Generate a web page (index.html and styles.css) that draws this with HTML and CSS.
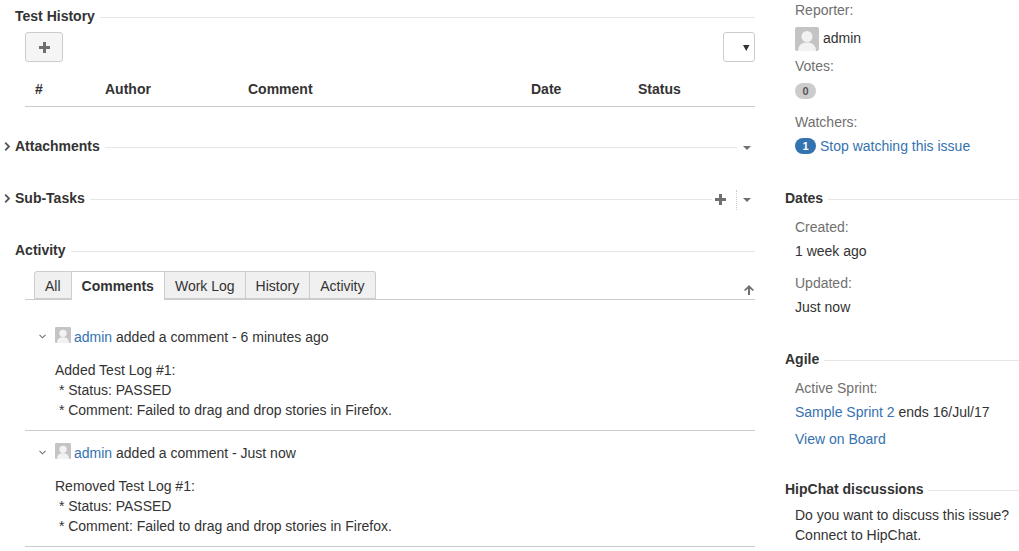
FILE: index.html
```html
<!DOCTYPE html>
<html lang="en">
<head>
<meta charset="utf-8">
<title>Issue</title>
<link rel="stylesheet" href="styles.css">
</head>
<body>
<div class="page">
  <main class="main">
    <section class="module first">
      <div class="mod-head"><h4>Test History</h4><span class="rule"></span></div>
      <div class="mod-body">
        <div class="toolbar">
          <button class="btn btn-add"><svg width="11" height="11" viewBox="0 0 11 11"><path d="M4 0h3v4h4v3H7v4H4V7H0V4h4z" fill="#707070"/></svg></button>
          <button class="btn btn-drop"><svg width="7" height="7" viewBox="0 0 7 7"><path d="M0 1h6.5L3.25 7z" fill="#333"/></svg></button>
        </div>
        <div class="thead">
          <span class="c-num">#</span><span class="c-author">Author</span><span class="c-comment">Comment</span><span class="c-date">Date</span><span class="c-status">Status</span>
        </div>
      </div>
    </section>

    <section class="module attach">
      <div class="mod-head"><svg class="twix" width="7" height="9" viewBox="0 0 7 9"><path d="M1.2 .7l3.800 3.800-3.800 3.800" fill="none" stroke="#555" stroke-width="1.800"/></svg><h4>Attachments</h4><span class="rule"></span><svg class="caret" width="8" height="4" viewBox="0 0 8 4"><path d="M0 0h8L4 4z" fill="#707070"/></svg></div>
    </section>

    <section class="module subtasks">
      <div class="mod-head"><svg class="twix" width="7" height="9" viewBox="0 0 7 9"><path d="M1.2 .7l3.800 3.800-3.800 3.800" fill="none" stroke="#555" stroke-width="1.800"/></svg><h4>Sub-Tasks</h4><span class="rule"></span>
        <svg class="plus" width="11" height="11" viewBox="0 0 11 11"><path d="M4 0h3v4h4v3H7v4H4V7H0V4h4z" fill="#707070"/></svg>
        <span class="dots"></span>
        <svg class="caret caret-tight" width="8" height="4" viewBox="0 0 8 4"><path d="M0 0h8L4 4z" fill="#707070"/></svg></div>
    </section>

    <section class="module activity">
      <div class="mod-head"><h4>Activity</h4><span class="rule"></span></div>
      <div class="mod-body">
        <div class="tabs">
          <span class="tab">All</span><span class="tab active">Comments</span><span class="tab">Work Log</span><span class="tab">History</span><span class="tab">Activity</span>
          <svg class="sort" width="10" height="10" viewBox="0 0 10 10"><path d="M5 0L10 5 8.800 6 6 3.800V10H4V3.800L1.200 6 0 5z" fill="#707070"/></svg>
        </div>
        <article class="comment">
          <div class="c-head">
            <svg class="chev" width="7" height="5" viewBox="0 0 7 5"><path d="M.5 .8l3 3 3-3" fill="none" stroke="#707070" stroke-width="1.100"/></svg>
            <svg class="av16" width="16" height="16" viewBox="0 0 24 24"><rect width="24" height="24" rx="2" fill="#c4c4c4"/><circle cx="12" cy="9.500" r="5.500" fill="#f2f2f2"/><path d="M3 24c0-6 4-8.500 9-8.500s9 2.500 9 8.500z" fill="#f2f2f2"/></svg>
            <span class="who"><a href="#">admin</a> added a comment - 6 minutes ago</span>
          </div>
          <p class="c-text">Added Test Log #1:<br>&nbsp;* Status: PASSED<br>&nbsp;* Comment: Failed to drag and drop stories in Firefox.</p>
        </article>
        <article class="comment">
          <div class="c-head">
            <svg class="chev" width="7" height="5" viewBox="0 0 7 5"><path d="M.5 .8l3 3 3-3" fill="none" stroke="#707070" stroke-width="1.100"/></svg>
            <svg class="av16" width="16" height="16" viewBox="0 0 24 24"><rect width="24" height="24" rx="2" fill="#c4c4c4"/><circle cx="12" cy="9.500" r="5.500" fill="#f2f2f2"/><path d="M3 24c0-6 4-8.500 9-8.500s9 2.500 9 8.500z" fill="#f2f2f2"/></svg>
            <span class="who"><a href="#">admin</a> added a comment - Just now</span>
          </div>
          <p class="c-text">Removed Test Log #1:<br>&nbsp;* Status: PASSED<br>&nbsp;* Comment: Failed to drag and drop stories in Firefox.</p>
        </article>
      </div>
    </section>
  </main>

  <aside class="side">
    <div class="people">
      <div class="label">Reporter:</div>
      <div class="reporter">
        <svg width="24" height="24" viewBox="0 0 24 24"><rect width="24" height="24" rx="2" fill="#c4c4c4"/><circle cx="12" cy="9.500" r="5.500" fill="#f2f2f2"/><path d="M3 24c0-6 4-8.500 9-8.500s9 2.500 9 8.500z" fill="#f2f2f2"/></svg>
        <span>admin</span>
      </div>
      <div class="label votes">Votes:</div>
      <div class="badge-row"><span class="badge grey">0</span></div>
      <div class="label watchers">Watchers:</div>
      <div class="watch-row"><span class="badge blue">1</span><a href="#">Stop watching this issue</a></div>
    </div>

    <section class="s-mod dates">
      <div class="mod-head side-head"><h4>Dates</h4><span class="rule"></span></div>
      <div class="s-body">
        <div class="label l-created">Created:</div>
        <div class="val v-created">1 week ago</div>
        <div class="label l-updated">Updated:</div>
        <div class="val v-updated">Just now</div>
      </div>
    </section>

    <section class="s-mod agile">
      <div class="mod-head side-head"><h4>Agile</h4><span class="rule"></span></div>
      <div class="s-body">
        <div class="label l-sprint">Active Sprint:</div>
        <div class="val v-sprint"><a href="#">Sample Sprint 2</a> ends 16/Jul/17</div>
        <div class="val v-board"><a href="#">View on Board</a></div>
      </div>
    </section>

    <section class="s-mod hipchat">
      <div class="mod-head side-head"><h4>HipChat discussions</h4><span class="rule"></span></div>
      <div class="s-body">
        <div class="val v-hip">Do you want to discuss this issue?<br>Connect to HipChat.</div>
      </div>
    </section>
  </aside>
</div>
</body>
</html>
```
FILE: styles.css
```css
html, body { margin: 0; padding: 0; }
body {
  width: 1019px;
  height: 551px;
  overflow: hidden;
  background: #fff;
  color: #333;
  font: 14px/20px "Liberation Sans", Arial, sans-serif;
}
a { color: #3572b0; text-decoration: none; }
h4 { margin: 0; font-size: 14px; line-height: 20px; font-weight: bold; color: #333; }

.page { display: flex; align-items: flex-start; }
.main { width: 755px; flex: none; padding-top: 6px; }
.side { width: 234px; flex: none; margin-left: 30px; }

.mod-head { display: flex; align-items: center; height: 20px; padding-left: 15px; position: relative; }
.side-head { padding-left: 0; }
.rule { flex: 1; height: 1px; background: #e6e6e6; margin-left: 5px; margin-top: 3px; }
.twix { position: absolute; left: 4px; top: 6px; }
.caret { margin: 4px 4px 0 6px; flex: none; }
.caret-tight { margin-left: 6px; }
.plus { margin-left: 3px; margin-top: 3px; flex: none; }
.dots { height: 20px; margin: 4px 0 0 10px; border-left: 1px dotted #ccc; flex: none; }

.mod-body { padding-left: 25px; }
.toolbar { display: flex; justify-content: space-between; padding-top: 6px; }
.btn { box-sizing: border-box; height: 30px; padding: 0; border: 1px solid #ccc; border-radius: 3px; display: flex; align-items: center; justify-content: center; }
.btn-add { width: 38px; background: #f5f5f5; }
.btn-drop { width: 32px; background: #fff; padding-left: 14px; }

.thead { display: flex; height: 45px; box-sizing: border-box; border-bottom: 1px solid #ccc; padding-top: 17px; font-weight: bold; }
.thead span { display: block; flex: none; }
.c-num { width: 80px; padding-left: 10px; box-sizing: border-box; }
.c-author { width: 143px; }
.c-comment { width: 283px; }
.c-date { width: 107px; }

.attach { margin-top: 29px; }
.subtasks { margin-top: 32px; }
.activity { margin-top: 32px; }

.tabs { display: flex; align-items: stretch; height: 28px; margin-top: 11px; padding-left: 9px; border-bottom: 1px solid #ccc; position: relative; }
.tab { box-sizing: border-box; padding: 4px 10px 0; height: 28px; background: #f0f0f0; border: 1px solid #ccc; border-left: 0; }
.tab:first-child { border-left: 1px solid #ccc; border-radius: 3px 0 0 0; }
.tab:nth-child(5) { border-radius: 0 3px 0 0; }
.tab.active { background: #fff; font-weight: bold; height: 29px; border-bottom: 0; }
.sort { position: absolute; right: 1px; top: 14px; }

.comment { border-bottom: 1px solid #ccc; padding-left: 30px; }
.comment:first-of-type { padding-top: 27px; height: 103px; }
.comment + .comment { padding-top: 12px; height: 103px; }
.c-head { display: flex; align-items: flex-start; height: 20px; position: relative; }
.chev { position: absolute; left: -16px; top: 7px; }
.av16 { margin-right: 3px; flex: none; }
.c-text { margin: 13px 0 0; }

.label { color: #707070; }
.reporter { display: flex; align-items: center; gap: 4px; margin-top: 7px; height: 24px; }
.reporter svg { display: block; }
.reporter span { margin-bottom: 2px; }
.people { padding-left: 10px; }
.votes { margin-top: 5px; }
.badge-row { margin-top: 7px; height: 16px; display: flex; }
.badge { display: block; box-sizing: border-box; width: 21px; height: 16px; border-radius: 8px; font-size: 11px; line-height: 16px; font-weight: bold; text-align: center; }
.badge.grey { background: #ccc; color: #555; }
.badge.blue { background: #3572b0; color: #fff; }
.watchers { margin-top: 13px; }
.watch-row { display: flex; align-items: center; gap: 4px; margin-top: 4px; }

.dates { margin-top: 32px; }
.agile { margin-top: 32px; }
.hipchat { margin-top: 30px; }
.s-body { padding-left: 10px; }
.l-created { margin-top: 9px; }
.v-created { margin-top: 4px; }
.l-updated { margin-top: 12px; }
.v-updated { margin-top: 4px; }
.l-sprint { margin-top: 9px; }
.v-sprint { margin-top: 4px; }
.v-board { margin-top: 7px; }
.v-hip { margin-top: 6px; }
```
